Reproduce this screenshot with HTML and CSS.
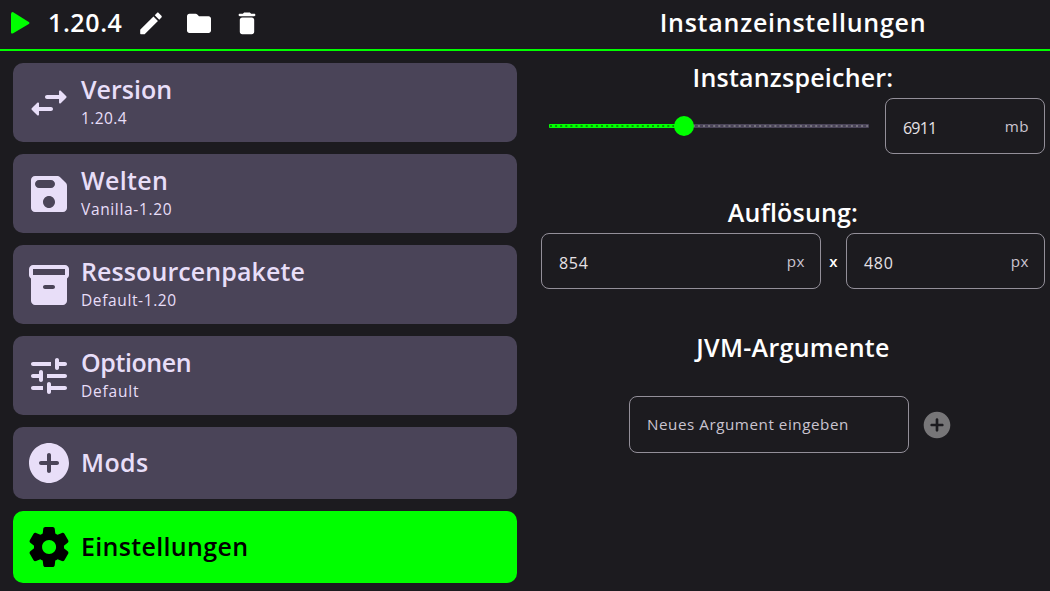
FILE: index.html
```
<!DOCTYPE html>
<html lang="de">
<head>
<meta charset="utf-8">
<title>Instanzeinstellungen</title>
<link rel="stylesheet" href="styles.css">
</head>
<body>
<header class="topbar">
  <div class="instance">
    <svg class="play" viewBox="0 0 20 24"><path d="M1 3v18.400q.4 1.800 2.200.9L18.800 13q1.300-1 0-2L3.200 1.200Q1.400.5 1 3z"/></svg>
    <span class="title instance-name">1.20.4</span>
    <button class="tool"><svg viewBox="0 0 24 24"><path d="M3 17.460v3.040c0 .28.220.5.5.5h3.040c.13 0 .26-.05.350-.150L17.810 9.940l-3.750-3.750L3.150 17.100c-.1.100-.150.220-.150.360zM20.710 7.040c.39-.39.39-1.020 0-1.410l-2.340-2.340c-.39-.39-1.020-.39-1.410 0l-1.830 1.830 3.750 3.750 1.830-1.830z"/></svg></button>
    <button class="tool"><svg viewBox="0 0 24 24"><path d="M10.590 4.590C10.210 4.210 9.700 4 9.170 4H4c-1.100 0-1.990.9-1.990 2L2 18c0 1.100.9 2 2 2h16c1.100 0 2-.9 2-2V8c0-1.100-.9-2-2-2h-8l-1.410-1.410z"/></svg></button>
    <button class="tool"><svg viewBox="0 0 24 24"><path d="M6 19c0 1.100.9 2 2 2h8c1.100 0 2-.9 2-2V9c0-1.100-.9-2-2-2H8c-1.100 0-2 .9-2 2v10zM18 4h-2.500l-.71-.71c-.18-.18-.44-.29-.7-.29H9.910c-.26 0-.52.110-.7.290L8.500 4H6c-.55 0-1 .45-1 1s.45 1 1 1h12c.55 0 1-.45 1-1s-.45-1-1-1z"/></svg></button>
  </div>
  <h1 class="title page-title">Instanzeinstellungen</h1>
</header>
<main class="layout">
  <nav class="menu">
    <a class="card">
      <svg viewBox="0 0 24 24"><path d="M6.140 11.860l-2.780 2.790c-.19.200-.19.510 0 .710l2.780 2.790c.310.320.850.090.850-.350V16H13c.55 0 1-.45 1-1s-.45-1-1-1H7v-1.790c0-.45-.54-.67-.86-.35zm14.510-3.210l-2.780-2.790c-.31-.32-.85-.09-.85.350V8H11c-.55 0-1 .45-1 1s.45 1 1 1h6.010v1.790c0 .450.540.670.850.350l2.780-2.790c.200-.19.200-.51.010-.7z"/></svg>
      <span class="labels"><span class="title t-version">Version</span><span class="sub s-version">1.20.4</span></span>
    </a>
    <a class="card">
      <svg viewBox="0 0 24 24"><path d="M17.590 3.590c-.38-.38-.89-.59-1.420-.59H5c-1.110 0-2 .9-2 2v14c0 1.100.9 2 2 2h14c1.100 0 2-.9 2-2V7.830c0-.53-.21-1.040-.59-1.410l-2.820-2.830zM12 19c-1.660 0-3-1.340-3-3s1.340-3 3-3 3 1.340 3 3-1.340 3-3 3zm1-10H7c-1.100 0-2-.9-2-2s.9-2 2-2h6c1.100 0 2 .9 2 2s-.9 2-2 2z"/></svg>
      <span class="labels"><span class="title t-worlds">Welten</span><span class="sub s-worlds">Vanilla-1.20</span></span>
    </a>
    <a class="card">
      <svg viewBox="0 0 24 24"><path d="M20 2H4c-1 0-2 .9-2 2v3.010c0 .720.430 1.340 1 1.690V20c0 1.100 1.100 2 2 2h14c.9 0 2-.9 2-2V8.700c.570-.35 1-.97 1-1.690V4c0-1.100-1-2-2-2zm-6 12h-4c-.55 0-1-.45-1-1s.45-1 1-1h4c.55 0 1 .45 1 1s-.45 1-1 1zm6-7H4V4h16v3z"/></svg>
      <span class="labels"><span class="title t-packs">Ressourcenpakete</span><span class="sub s-packs">Default-1.20</span></span>
    </a>
    <a class="card">
      <svg viewBox="0 0 24 24"><path d="M3 18c0 .55.45 1 1 1h5v-2H4c-.55 0-1 .45-1 1zM3 6c0 .55.45 1 1 1h9V5H4c-.55 0-1 .45-1 1zm10 14v-1h7c.55 0 1-.45 1-1s-.45-1-1-1h-7v-1c0-.55-.45-1-1-1s-1 .45-1 1v4c0 .55.45 1 1 1s1-.45 1-1zM7 10v1H4c-.55 0-1 .45-1 1s.45 1 1 1h3v1c0 .55.45 1 1 1s1-.45 1-1v-4c0-.55-.45-1-1-1s-1 .45-1 1zm14 2c0-.55-.45-1-1-1h-9v2h9c.55 0 1-.45 1-1zm-5-3c.55 0 1-.45 1-1V7h3c.55 0 1-.45 1-1s-.45-1-1-1h-3V4c0-.55-.45-1-1-1s-1 .45-1 1v4c0 .55.45 1 1 1z"/></svg>
      <span class="labels"><span class="title t-options">Optionen</span><span class="sub s-options">Default</span></span>
    </a>
    <a class="card short">
      <svg viewBox="0 0 24 24"><path d="M12 2C6.480 2 2 6.480 2 12s4.480 10 10 10 10-4.480 10-10S17.520 2 12 2zm4 11h-3v3c0 .55-.45 1-1 1s-1-.45-1-1v-3H8c-.55 0-1-.45-1-1s.45-1 1-1h3V8c0-.55.45-1 1-1s1 .45 1 1v3h3c.55 0 1 .45 1 1s-.45 1-1 1z"/></svg>
      <span class="title t-mods">Mods</span>
    </a>
    <a class="card short active">
      <svg viewBox="0 0 24 24"><path d="M19.500 12c0-.23-.01-.45-.03-.68l1.860-1.410c.4-.3.510-.86.260-1.300l-1.870-3.230c-.25-.44-.79-.62-1.250-.42l-2.150.910c-.37-.26-.76-.49-1.170-.68l-.29-2.310c-.06-.5-.49-.88-.99-.88h-3.730c-.51 0-.94.380-1 .880l-.29 2.310c-.41.190-.8.420-1.170.680l-2.150-.91c-.46-.2-1-.02-1.250.420L2.410 8.620c-.25.440-.14.990.260 1.300l1.860 1.410c-.02.220-.03.440-.03.670s.010.450.030.680l-1.860 1.410c-.4.300-.51.860-.26 1.300l1.870 3.230c.250.440.790.620 1.250.420l2.150-.91c.370.260.760.490 1.170.680l.290 2.310c.060.500.490.880.990.880h3.730c.500 0 .930-.38.990-.88l.290-2.310c.410-.19.800-.42 1.170-.68l2.150.910c.460.200 1 .020 1.250-.42l1.870-3.230c.250-.44.140-.99-.26-1.300l-1.860-1.410c.030-.23.040-.45.040-.68zm-7.460 3.500c-1.930 0-3.500-1.570-3.500-3.500s1.570-3.500 3.500-3.500 3.500 1.570 3.500 3.500-1.570 3.500-3.500 3.500z"/></svg>
      <span class="title t-settings">Einstellungen</span>
    </a>
  </nav>
  <section class="settings">
    <h2 class="title h-memory">Instanzspeicher:</h2>
    <div class="row memory-row">
      <div class="slider">
        <svg viewBox="0 0 320 20">
          <rect class="track" x="0" y="8" width="320" height="4" rx="1"/>
          <path class="ticks" d="M1 10H319"/>
          <rect class="filled" x="0" y="8" width="135" height="4" rx="1"/>
          <path class="ticks on" d="M1 10H135"/>
          <circle class="thumb" cx="135" cy="10" r="10"/>
        </svg>
      </div>
      <div class="field memory"><span class="value v-memory">6911</span><span class="unit">mb</span></div>
    </div>
    <h2 class="title h-resolution">Auflösung:</h2>
    <div class="row resolution-row">
      <div class="field width"><span class="value v-res">854</span><span class="unit">px</span></div>
      <span class="times">x</span>
      <div class="field height"><span class="value v-res">480</span><span class="unit">px</span></div>
    </div>
    <h2 class="title h-jvm">JVM-Argumente</h2>
    <div class="row argument-row">
      <div class="field argument"><span class="placeholder">Neues Argument eingeben</span></div>
      <svg class="add" viewBox="0 0 24 24"><path d="M12 2C6.480 2 2 6.480 2 12s4.480 10 10 10 10-4.480 10-10S17.520 2 12 2zm4 11h-3v3c0 .55-.45 1-1 1s-1-.45-1-1v-3H8c-.55 0-1-.45-1-1s.45-1 1-1h3V8c0-.55.45-1 1-1s1 .45 1 1v3h3c.55 0 1 .45 1 1s-.45 1-1 1z"/></svg>
    </div>
  </section>
</main>
</body>
</html>
```
FILE: styles.css
```
* { box-sizing: border-box; }
body {
  margin: 0;
  width: 1050px;
  height: 591px;
  overflow: hidden;
  background: #1c1b1f;
  color: #fff;
  font-family: "Open Sans", "Noto Sans", sans-serif;
}
svg { display: block; flex: none; fill: currentColor; }
.title {
  margin: 0;
  padding-bottom: 2px;
  font-size: 25px;
  font-weight: 600;
  line-height: 32px;
  white-space: nowrap;
}
.topbar {
  display: grid;
  grid-template-columns: 536px 514px;
  height: 51px;
  border-bottom: 2px solid #0f0;
}
.instance { display: flex; align-items: center; height: 46px; padding-left: 10px; }
.play { width: 20px; height: 24px; color: #0f0; }
.instance-name { width: 79px; margin-left: 18px; letter-spacing: .6px; }
.tool {
  display: grid;
  place-items: center;
  width: 48px;
  height: 46px;
  padding: 0;
  border: 0;
  background: none;
  color: #fff;
}
.tool svg { width: 28.800px; height: 28.800px; }
.instance .tool { transform: translateX(-.4px); }
.page-title { text-align: center; padding-top: 6px; letter-spacing: .76px; }
.layout { display: grid; grid-template-columns: 536px 514px; }
.menu { display: flex; flex-direction: column; gap: 12px; padding: 12px 19px 0 13px; }
.card {
  display: flex;
  align-items: center;
  gap: 8px;
  height: 79px;
  padding-left: 12px;
  border-radius: 10px;
  background: #4a4458;
  color: #e8def8;
}
.card svg { width: 48px; height: 48px; }
.card.short { height: 72px; }
.card.active { background: #0f0; color: #000; }
.labels { display: flex; flex-direction: column; }
.labels .title { line-height: 30px; }
.sub { padding-bottom: 2px; font-size: 15.500px; line-height: 24px; }
.t-worlds { letter-spacing: .35px; }
.t-packs { letter-spacing: .1px; }
.t-options { letter-spacing: -.4px; }
.t-mods { letter-spacing: .4px; }
.t-settings { letter-spacing: .33px; }
.s-version { letter-spacing: .4px; }
.s-worlds { letter-spacing: .65px; }
.s-packs { letter-spacing: .62px; }
.s-options { letter-spacing: .8px; }
.settings { padding: 10px 5px 0; text-align: center; }
.settings .title { line-height: 32px; }
.h-memory { letter-spacing: .22px; }
.row { display: flex; align-items: center; }
.memory-row { gap: 16px; padding-left: 8px; margin-top: 3px; }
.slider { width: 320px; height: 20px; }
.track { fill: #4a4458; }
.filled, .thumb { fill: #0f0; }
.ticks { fill: none; stroke: #77757e; stroke-width: 2; stroke-dasharray: 2 3.100; }
.ticks.on { stroke: #069306; }
.field {
  display: flex;
  align-items: center;
  justify-content: space-between;
  height: 56px;
  padding: 0 15px 0 17px;
  border: 1px solid #938f99;
  border-radius: 8px;
}
.value { padding-top: 4px; font-size: 16px; color: #e6e1e5; }
.v-memory { letter-spacing: -.8px; }
.v-res { letter-spacing: .7px; }
.unit { padding-bottom: 1px; font-size: 15.200px; color: #cac4d0; letter-spacing: .5px; }
.memory { width: 160px; }
.h-resolution { margin-top: 42px; letter-spacing: .2px; }
.resolution-row { margin-top: 3px; }
.width { width: 280px; }
.height { width: 199px; }
.times { width: 25px; font-size: 15px; font-weight: 600; }
.h-jvm { margin-top: 42px; letter-spacing: .3px; }
.argument-row { gap: 12px; padding-left: 88px; margin-top: 31px; }
.argument { width: 280px; height: 57px; }
.placeholder { padding-bottom: 1px; font-size: 15.200px; letter-spacing: .55px; color: #cac4d0; }
.add { width: 32px; height: 32px; color: #777678; }
```
